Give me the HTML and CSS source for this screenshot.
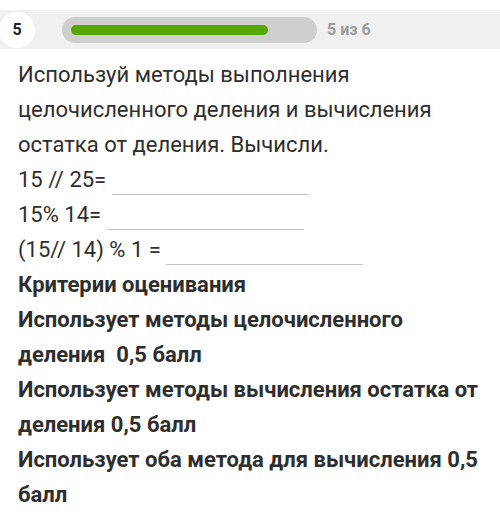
FILE: index.html
```html
<!DOCTYPE html>
<html lang="ru">
<head>
<meta charset="utf-8">
<link rel="stylesheet" href="styles.css">
</head>
<body>
<div class="topbar">
  <div class="num">5</div>
  <div class="track"><div class="fill" style="width:83.33%"></div></div>
  <div class="count">5 из 6</div>
</div>
<div class="content">
  <p class="line">Используй методы выполнения целочисленного деления и вычисления остатка от деления. Вычисли.</p>
  <p class="line">15 // 25= <span class="blank"></span></p>
  <p class="line">15% 14= <span class="blank"></span></p>
  <p class="line">(15// 14) % 1 = <span class="blank"></span></p>
  <p class="line bold">Критерии оценивания</p>
  <p class="line bold">Использует методы целочисленного деления&nbsp; 0,5 балл</p>
  <p class="line bold">Использует методы вычисления остатка от деления 0,5 балл</p>
  <p class="line bold">Использует оба метода для вычисления 0,5 балл</p>
</div>
</body>
</html>
```

FILE: styles.css
```css
html, body {
  margin: 0;
  padding: 0;
  background: #ffffff;
}
body {
  font-family: Roboto, "Noto Sans", sans-serif;
  color: #2e2e2e;
  padding-top: 10px;
}
.topbar {
  height: 39px;
  background: #f0f0f0;
  display: flex;
  align-items: center;
}
.num {
  width: 36px;
  height: 36px;
  border-radius: 50%;
  background: #ffffff;
  margin-left: -1px;
  display: flex;
  align-items: center;
  justify-content: center;
  font-weight: 700;
  font-size: 16px;
  color: #222;
}
.track {
  margin-left: 27px;
  width: 255px;
  height: 26px;
  box-sizing: border-box;
  padding: 8px 9px;
  border-radius: 13px;
  background: #cfcfcf;
}
.fill {
  height: 10px;
  border-radius: 5px;
  background: #56a601;
}
.count {
  margin-left: 10px;
  font-size: 16px;
  font-weight: 700;
  color: #9b9b9b;
}
.content {
  padding: 8px 8px 0 18px;
}
.line {
  margin: 0;
  font-size: 22px;
  line-height: 35px;
}
.bold {
  font-weight: 700;
}
.blank {
  display: inline-block;
  width: 197px;
  height: 0;
  border-bottom: 1px solid #c4c4c4;
  vertical-align: -8px;
}
```
